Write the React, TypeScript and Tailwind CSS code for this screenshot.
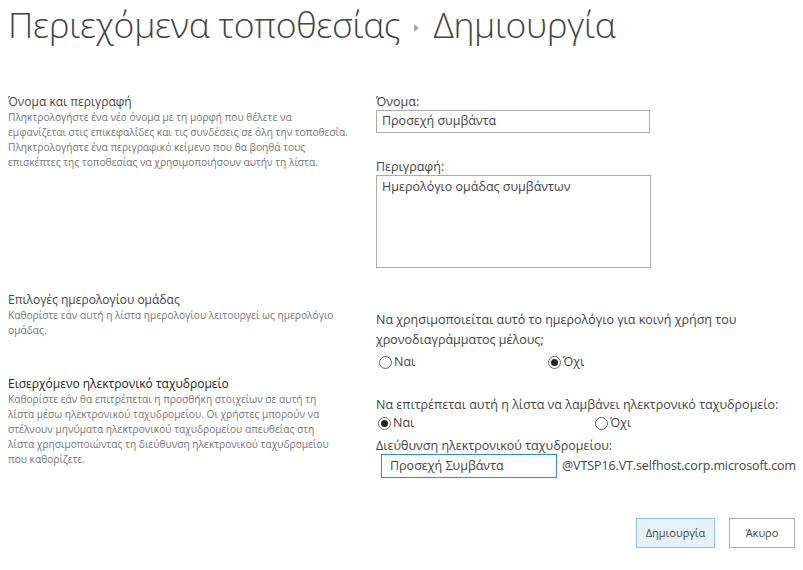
import React from "react";

const font = { fontFamily: '"Open Sans", "Noto Sans", sans-serif' };

function Radio({ checked, label }: { checked?: boolean; label: string }) {
  return (
    <div className="flex items-center gap-[2px] h-[16px] leading-[16px] text-[12.5px] text-[#444]">
      <span className="w-[13px] h-[13px] rounded-full border border-[#666] bg-white flex items-center justify-center">
        {checked && <span className="w-[7px] h-[7px] rounded-full bg-[#222]" />}
      </span>
      <span>{label}</span>
    </div>
  );
}

export default function App() {
  return (
    <div className="w-[803px] h-[570px] bg-white relative overflow-hidden" style={font}>
      <div className="flex items-center pl-[8px] h-[50px] text-[#444]">
        <span className="text-[35.5px] font-light tracking-[-0.3px]">Περιεχόμενα τοποθεσίας</span>
        <span className="mx-[14px] mt-[6px] inline-block w-0 h-0 border-y-[4px] border-y-transparent border-l-[5px] border-l-[#aaa]" />
        <span className="text-[35.5px] font-light tracking-[-0.3px]">Δημιουργία</span>
      </div>

      {/* Section 1 */}
      <div className="grid grid-cols-[368px_1fr] mt-[44px]">
        <div className="pl-[8px]">
          <div className="text-[12px] text-[#444] leading-[16px]">Όνομα και περιγραφή</div>
          <div className="text-[10.2px] text-[#777] leading-[15px]">
            Πληκτρολογήστε ένα νέο όνομα με τη μορφή που θέλετε να
            <br />
            εμφανίζεται στις επικεφαλίδες και τις συνδέσεις σε όλη την τοποθεσία.
            <br />
            Πληκτρολογήστε ένα περιγραφικό κείμενο που θα βοηθά τους
            <br />
            επισκέπτες της τοποθεσίας να χρησιμοποιήσουν αυτήν τη λίστα.
          </div>
        </div>
        <div className="pl-[8px]">
          <div className="text-[12.5px] text-[#444] leading-[16px]">Όνομα:</div>
          <div className="w-[274px] h-[23px] border border-[#ababab] px-[5px] flex items-center text-[12.5px] text-[#444]">
            Προσεχή συμβάντα
          </div>
          <div className="text-[12.5px] text-[#444] leading-[16px] mt-[26px]">Περιγραφή:</div>
          <div className="w-[275px] h-[93px] border border-[#ababab] px-[5px] pt-[2px] text-[12.5px] text-[#444]">
            Ημερολόγιο ομάδας συμβάντων
          </div>
        </div>
      </div>

      {/* Section 2 */}
      <div className="grid grid-cols-[368px_1fr] mt-[24px]">
        <div className="pl-[8px]">
          <div className="text-[12px] text-[#444] leading-[16px]">Επιλογές ημερολογίου ομάδας</div>
          <div className="text-[10.2px] text-[#777] leading-[15px]">
            Καθορίστε εάν αυτή η λίστα ημερολογίου λειτουργεί ως ημερολόγιο
            <br />
            ομάδας.
          </div>
        </div>
        <div className="pl-[8px] pt-[18px]">
          <div className="text-[12.5px] text-[#444] leading-[20px]">
            Να χρησιμοποιείται αυτό το ημερολόγιο για κοινή χρήση του
            <br />
            χρονοδιαγράμματος μέλους;
          </div>
          <div className="flex mt-[4px] pl-[3px]">
            <div className="w-[169px]">
              <Radio label="Ναι" />
            </div>
            <Radio checked label="Όχι" />
          </div>
        </div>
      </div>

      {/* Section 3 */}
      <div className="grid grid-cols-[368px_1fr] mt-[6px]">
        <div className="pl-[8px]">
          <div className="text-[12px] text-[#222] leading-[16px]">Εισερχόμενο ηλεκτρονικό ταχυδρομείο</div>
          <div className="text-[10.2px] text-[#777] leading-[15px]">
            Καθορίστε εάν θα επιτρέπεται η προσθήκη στοιχείων σε αυτή τη
            <br />
            λίστα μέσω ηλεκτρονικού ταχυδρομείου. Οι χρήστες μπορούν να
            <br />
            στέλνουν μηνύματα ηλεκτρονικού ταχυδρομείου απευθείας στη
            <br />
            λίστα χρησιμοποιώντας τη διεύθυνση ηλεκτρονικού ταχυδρομείου
            <br />
            που καθορίζετε.
          </div>
        </div>
        <div className="pl-[8px] pt-[21px]">
          <div className="text-[12.5px] text-[#444] leading-[16px]">
            Να επιτρέπεται αυτή η λίστα να λαμβάνει ηλεκτρονικό ταχυδρομείο:
          </div>
          <div className="flex pl-[2px] mt-[2px]">
            <div className="w-[217px]">
              <Radio checked label="Ναι" />
            </div>
            <Radio label="Όχι" />
          </div>
          <div className="text-[12.5px] text-[#444] leading-[16px] mt-[7px]">
            Διεύθυνση ηλεκτρονικού ταχυδρομείου:
          </div>
          <div className="flex items-center pl-[5px]">
            <div className="w-[176px] h-[24px] border border-[#2a8dd4] px-[8px] flex items-center text-[12.5px] text-[#444]">
              Προσεχή Συμβάντα
            </div>
            <span className="ml-[5px] text-[12.5px] tracking-[-0.1px] text-[#444]">@VTSP16.VT.selfhost.corp.microsoft.com</span>
          </div>
        </div>
      </div>

      {/* Buttons */}
      <div className="flex justify-end gap-[14px] pr-[8px] mt-[40px]">
        <button className="w-[79px] h-[30px] border border-[#92c0e0] bg-[#e6f2fa] text-[11px] text-[#444]">
          Δημιουργία
        </button>
        <button className="w-[66px] h-[30px] border border-[#ababab] bg-white text-[11px] text-[#444]">
          Άκυρο
        </button>
      </div>
    </div>
  );
}
